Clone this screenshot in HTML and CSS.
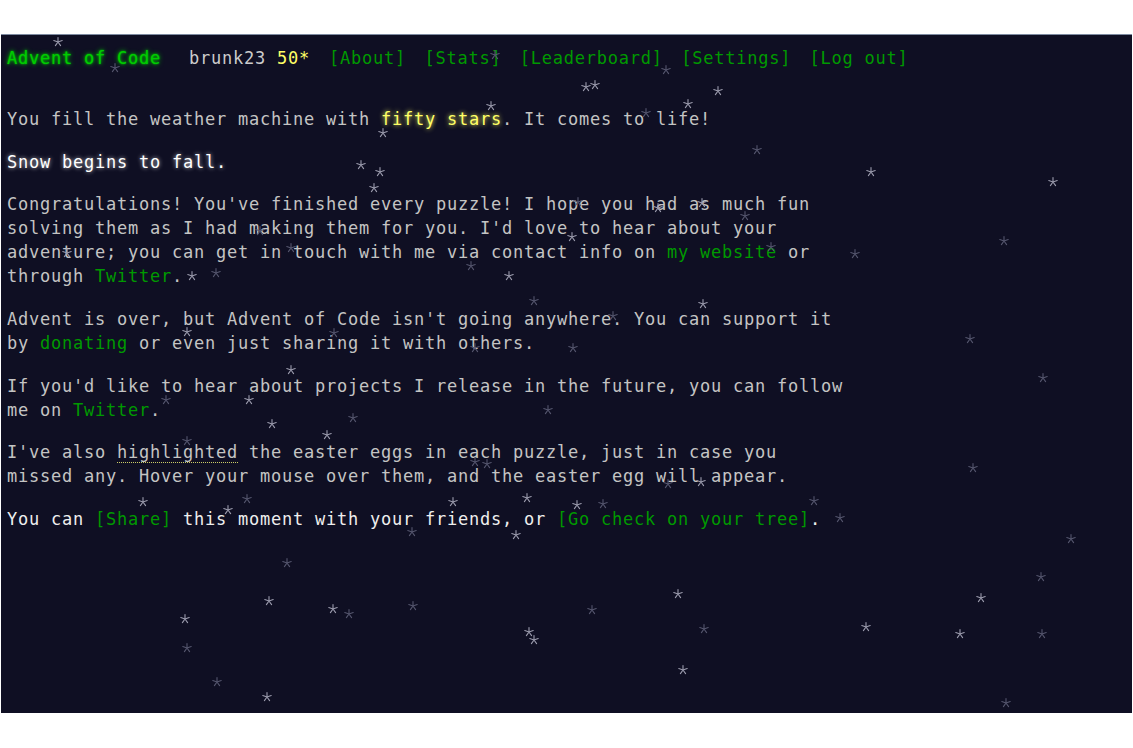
FILE: index.html
```html
<!DOCTYPE html>
<html lang="en">
<head>
<meta charset="utf-8">
<title>Advent of Code</title>
<link rel="stylesheet" href="styles.css">
</head>
<body>
<div class="screen">
  <header class="top">
    <h1 class="title"><a href="#">Advent of Code</a></h1>
    <div class="user">brunk23 <span class="star-count">50*</span></div>
    <nav>
      <ul class="nav">
        <li><a href="#">[About]</a></li>
        <li><a href="#">[Stats]</a></li>
        <li><a href="#">[Leaderboard]</a></li>
        <li><a href="#">[Settings]</a></li>
        <li><a href="#">[Log out]</a></li>
      </ul>
    </nav>
  </header>
  <main class="article">
    <p>You fill the weather machine with <span class="fifty">fifty stars</span>. It comes to life!</p>
    <p class="snowfall">Snow begins to fall.</p>
    <p>Congratulations! You've finished every puzzle! I hope you had as much fun solving them as I had making them for you. I'd love to hear about your adventure; you can get in touch with me via contact info on <a href="#">my website</a> or through <a href="#">Twitter</a>.</p>
    <p>Advent is over, but Advent of Code isn't going anywhere. You can support it by <a href="#">donating</a> or even just sharing it with others.</p>
    <p>If you'd like to hear about projects I release in the future, you can follow me on <a href="#">Twitter</a>.</p>
    <p>I've also <span class="highlighted">highlighted</span> the easter eggs in each puzzle, just in case you missed any. Hover your mouse over them, and the easter egg will appear.</p>
    <p class="final">You can <a href="#">[Share]</a> this moment with your friends, or <a href="#">[Go check on your tree]</a>.</p>
  </main>
  <div class="snow" id="snow"></div>
</div>
<script src="snow.js"></script>
</body>
</html>
```

FILE: styles.css
```css
html, body {
  margin: 0;
  background: #ffffff;
}

body {
  padding: 34px 0 0 1px;
  font-family: "DejaVu Sans Mono", "Liberation Mono", monospace;
}

.screen {
  position: relative;
  width: 1131px;
  height: 679px;
  box-sizing: border-box;
  background: #0f0f23;
  border-top: 1px solid #7d8aa0;
  padding: 11px 0 0 6px;
  overflow: hidden;
  color: #c4c4c4;
  font-size: 17px;
  letter-spacing: 0.765px;
  line-height: 24px;
}

a {
  color: #009900;
  text-decoration: none;
}

.top {
  display: flex;
  align-items: baseline;
  white-space: nowrap;
  margin-bottom: 37px;
}

.title {
  margin: 0 28px 0 0;
  font-size: inherit;
  font-weight: normal;
}

.title a {
  color: #00cc00;
  text-shadow: 0 0 2px #00cc00, 0 0 5px #00cc00;
}

.user {
  margin-right: 19px;
  color: #cccccc;
}

.star-count {
  color: #ffff66;
}

.nav {
  display: flex;
  gap: 18.4px;
  list-style: none;
  margin: 0;
  padding: 0;
}

.article {
  width: 841px;
}

.article p {
  margin: 0 0 18.67px;
}

.fifty {
  color: #ffff66;
  text-shadow: 0 0 5px #ffff66;
}

.snowfall {
  color: #ffffff;
  text-shadow: 0 0 4px rgba(255, 255, 255, 0.75);
}

.highlighted {
  border-bottom: 1px dotted #cccc66;
}

.final {
  color: #eeeeee;
}

.snow {
  position: absolute;
  left: 0;
  top: 0;
  width: 100%;
  height: 100%;
  pointer-events: none;
}

.flake {
  position: absolute;
  width: 10px;
  height: 10px;
}

.flake svg {
  display: block;
  width: 10px;
  height: 10px;
}

.flake.bright {
  color: #9c9cae;
}

.flake.dim {
  color: #55566e;
}
```

FILE: snow.js
```js
(function () {
  var flakes = [
    [58,42,1],[115,68,0],[495,55,0],[666,70,0],[586,87,1],[595,85,1],[718,91,1],
    [491,106,1],[688,104,1],[646,113,0],[383,133,1],[757,150,0],[361,165,1],[380,172,1],
    [871,172,1],[374,188,1],[1053,182,1],[578,202,0],[658,208,1],[702,203,1],[745,216,0],
    [572,237,1],[771,247,0],[471,266,0],[509,276,1],[260,231,0],[67,253,1],[291,248,0],
    [192,276,1],[216,273,0],[1004,241,0],[855,254,0],[534,301,0],[703,304,1],[613,316,0],
    [475,348,0],[573,348,0],[548,410,0],[187,332,1],[334,333,0],[291,370,1],[249,400,1],
    [166,400,0],[353,418,0],[272,424,1],[970,339,0],[1043,378,0],[187,441,0],[327,435,1],
    [973,468,0],[475,462,0],[487,464,0],[668,484,0],[701,482,1],[143,502,1],[247,499,0],
    [228,510,1],[412,532,0],[453,502,1],[527,498,1],[577,505,1],[603,504,0],[814,501,0],
    [840,518,0],[516,535,1],[1071,539,0],[287,563,0],[1041,577,0],[678,594,1],[269,601,1],
    [413,606,0],[333,609,1],[349,614,0],[592,610,0],[981,598,1],[185,619,1],[704,629,0],
    [866,627,1],[960,634,1],[1042,634,0],[529,632,1],[534,640,1],[187,648,0],[683,670,1],
    [217,682,0],[267,697,1],[1006,703,0]
  ];
  var svg = '<svg viewBox="0 0 10 10"><path d="M5 5V0.6M5 5L9.2 3.6M5 5L7.6 8.6M5 5L2.4 8.6M5 5L0.8 3.6" stroke="currentColor" stroke-width="1.1" stroke-linecap="round" fill="none"/></svg>';
  var layer = document.getElementById('snow');
  flakes.forEach(function (f) {
    var d = document.createElement('div');
    d.className = 'flake ' + (f[2] ? 'bright' : 'dim');
    d.style.left = (f[0] - 1 - 5) + 'px';
    d.style.top = (f[1] - 35 - 5) + 'px';
    d.innerHTML = svg;
    layer.appendChild(d);
  });
})();
```
